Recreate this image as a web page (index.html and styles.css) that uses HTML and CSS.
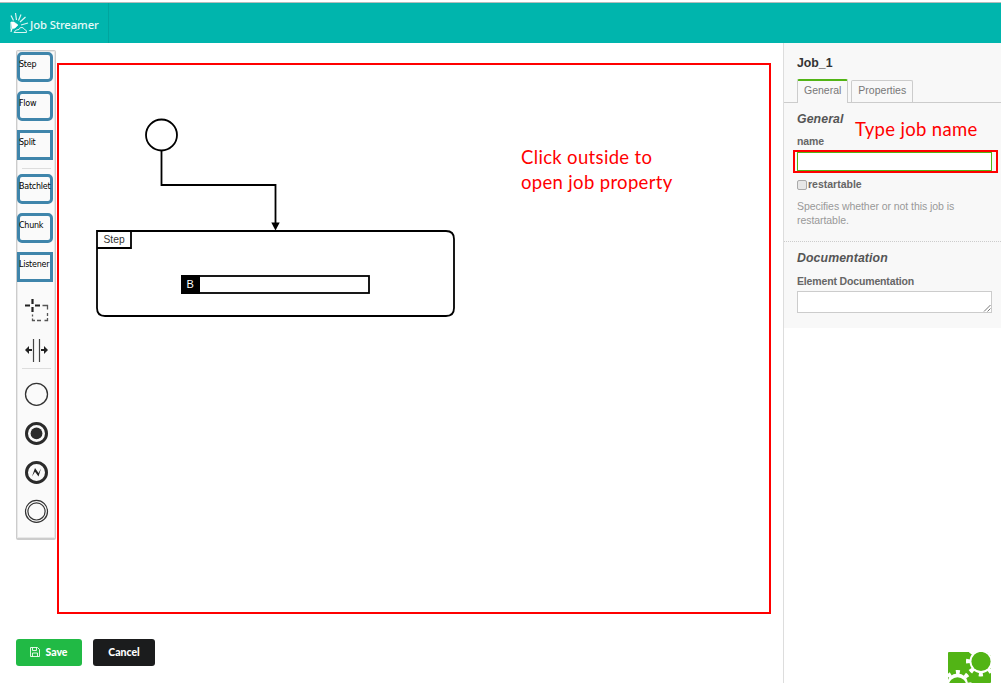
FILE: index.html
```html
<!DOCTYPE html>
<html lang="en">
<head>
<meta charset="utf-8">
<title>Job Streamer</title>
<link rel="stylesheet" href="styles.css">
</head>
<body>
<header class="topbar">
  <div class="brand">
    <svg class="brand-logo" width="19" height="24" viewBox="0 0 19 24" fill="none" stroke="#d9f6f3" stroke-width="1.2">
      <path d="M1 4.500l2.500 5M5.500 2l1 7M11 3.500l-2.500 6M15.500 6l-5.500 5M18 12l-7 2"/>
      <path d="M1 11v10l1-3M1 11l3 0 4 3-3 3-4 1z" fill="#fff" stroke="#fff" stroke-width=".6"/>
      <path d="M4 21.500h12.500q.5-2.500-2-3-1-2.500-3.500-2-2 .5-2 2-3-.5-5 3z" stroke-width="1"/>
    </svg>
    <span>Job Streamer</span>
  </div>
</header>
<div class="workspace">
  <main class="editor">
    <div class="modeler">
      <nav class="palette">
        <div class="tile round">Step</div>
        <div class="tile round">Flow</div>
        <div class="tile">Split</div>
        <hr class="sep">
        <div class="tile round">Batchlet</div>
        <div class="tile round">Chunk</div>
        <div class="tile">Listener</div>
        <svg class="tool first-tool" viewBox="0 0 30 30" fill="none" stroke="#222">
          <path d="M11.500 3v5M11.500 11v5M4 9.500h5M14 9.500h5" stroke-width="2.200"/>
          <path d="M21.500 9.500h5v4M26.500 17v3M26.500 22v2.500h-3M20 24.500h-4M14 24.500h-2.500v-2M11.500 20.500v-2" stroke="#555" stroke-width="1.300"/>
        </svg>
        <svg class="tool" viewBox="0 0 30 30">
          <path d="M12.500 4v23M18.500 4v23" stroke="#444" stroke-width="1.200"/>
          <path d="M4 15l4-4v3h3v2H8v3zM27 15l-4-4v3h-3v2h3v3z" fill="#222"/>
        </svg>
        <hr class="sep wide">
        <svg class="tool" viewBox="0 0 30 30" fill="none" stroke="#333"><circle cx="15.500" cy="15.300" r="11" stroke-width="1.300"/></svg>
        <svg class="tool" viewBox="0 0 30 30" fill="none" stroke="#2b2b2b"><circle cx="15.500" cy="15.400" r="10" stroke-width="3"/><circle cx="15.500" cy="15.400" r="5.900" fill="#2b2b2b" stroke="none"/></svg>
        <svg class="tool" viewBox="0 0 30 30" fill="none" stroke="#2b2b2b"><circle cx="15.500" cy="15.400" r="10" stroke-width="3"/><path d="M11 19.500l3-8.500 3.500 5 2.500-4.500-2.500 8-3.500-4.700z" fill="#222" stroke="none"/></svg>
        <svg class="tool" viewBox="0 0 30 30" fill="none" stroke="#333"><circle cx="15.500" cy="15.400" r="11" stroke-width="1.200"/><circle cx="15.500" cy="15.400" r="8.600" stroke-width="1.200"/></svg>
      </nav>
      <section class="canvas">
        <svg class="diagram" width="710" height="547" viewBox="59 65 710 547" fill="none" stroke="#000" stroke-width="1.8">
          <circle cx="161.500" cy="135" r="15.500"/>
          <path d="M161.500 151v34H275.500v40"/>
          <path d="M271.300 222.500h8.400l-4.200 8z" fill="#000" stroke="none"/>
          <path d="M97 231H446q8 0 8 8V308q0 8-8 8H105q-8 0-8-8z"/>
          <path d="M97 248H131V231"/>
          <rect x="182" y="276" width="187" height="17"/>
          <rect x="181" y="275" width="19" height="19" fill="#000" stroke="none"/>
          <text class="node-label" x="103.500" y="243">Step</text>
          <text class="node-badge" x="186.500" y="288">B</text>
        </svg>
        <p class="note canvas-note">Click outside to<br>open job property</p>
      </section>
    </div>
    <div class="actions">
      <button class="btn save">
        <svg width="10" height="10" viewBox="0 0 10 10" fill="none" stroke="#fff" stroke-opacity=".85"><path d="M.5.5h7l2 2v7h-9zM2.500.5v3h4v-3M2.500 9.500v-3.500h5v3.500"/></svg>
        Save
      </button>
      <button class="btn cancel">Cancel</button>
    </div>
  </main>
  <aside class="side">
    <div class="properties">
      <h1 class="element-id">Job_1</h1>
      <div class="tabs"><a class="tab active">General</a><a class="tab">Properties</a></div>
      <section class="group general">
        <h2>General</h2>
        <label class="field-label" for="name">name</label>
        <div class="name-field"><input id="name" class="name-input" type="text"></div>
        <div class="check-row"><span class="checkbox"></span><span>restartable</span></div>
        <p class="hint">Specifies whether or not this job is restartable.</p>
        <p class="note name-note">Type job name</p>
      </section>
      <section class="group documentation">
        <h2>Documentation</h2>
        <span class="field-label">Element Documentation</span>
        <div class="doc-input">
          <svg width="8" height="8" viewBox="0 0 8 8" stroke="#777" stroke-width="1"><path d="M1 7.500l6.500-6.500M4.500 7.500l3-3"/></svg>
        </div>
      </section>
    </div>
    <svg class="gear-logo" width="43" height="31" viewBox="0 0 43 31">
      <rect width="43" height="31" rx="1" fill="#52b415"/>
      <circle cx="33" cy="9.500" r="11.500" fill="#fff"/>
      <circle cx="33" cy="9.500" r="13" fill="none" stroke="#fff" stroke-width="4" stroke-dasharray="4.200 6.010" stroke-dashoffset="2.100"/>
      <circle cx="33" cy="9.500" r="9.600" fill="#52b415"/>
      <circle cx="9.500" cy="32" r="10.500" fill="#fff"/>
      <circle cx="9.500" cy="32" r="12" fill="none" stroke="#fff" stroke-width="4" stroke-dasharray="4 5.425" stroke-dashoffset="2"/>
      <circle cx="9.500" cy="34" r="8.800" fill="#52b415"/>
    </svg>
  </aside>
</div>
</body>
</html>
```
FILE: styles.css
```css
* { box-sizing: border-box; }
body {
  margin: 0;
  height: 683px;
  overflow: hidden;
  padding-top: 2px;
  background: #fff;
  font-family: "Liberation Sans", Arial, sans-serif;
}
h1, h2, p { margin: 0; }

.topbar {
  height: 41px;
  background: #00b5ad;
  border-top: 1px solid #b5bcbc;
  display: flex;
}
.brand {
  width: 109px;
  padding-left: 10px;
  border-right: 1px solid #00a59e;
  display: flex;
  align-items: center;
  color: #e6faf8;
  font: 500 11.3px "Noto Sans", sans-serif;
  white-space: nowrap;
  letter-spacing: -.12px;
}
.brand span { padding: 2px 0 0 1px; }

.workspace {
  display: grid;
  grid-template-columns: 784px 217px;
  height: 640px;
}
.editor { padding: 7px 13px 0 16px; }
.modeler { display: flex; align-items: flex-start; gap: 1px; }

.palette {
  width: 40px;
  height: 490px;
  padding: 1px 0 0;
  background: #fafafa;
  border: 1px solid #ccc;
  border-width: 1px 1px 2px;
  border-radius: 2px;
  box-shadow: inset 0 0 0 1px #e8e8e8;
}
.tile {
  width: 36px;
  height: 30px;
  margin-bottom: 9px;
  border: 3px solid #3f85ab;
  padding-top: 3px;
  color: #000;
  font: 8px/14px "DejaVu Sans", sans-serif;
  letter-spacing: -.25px;
  text-indent: -1px;
  white-space: nowrap;
}
.round { border-radius: 5px; }
.sep {
  width: 29px;
  height: 1px;
  margin: -1px 0 5px 5px;
  border: 0;
  background: #ddd;
}
.sep.wide { margin: -6px 0 10px 5px; }
.tool { display: block; width: 30px; height: 30px; margin: 0 0 9px 4px; }
.first-tool { margin-top: 14px; }

.canvas {
  position: relative;
  width: 714px;
  height: 551px;
  margin-top: 13px;
  border: 2px solid #f00;
}
.diagram { display: block; }
.node-label { font: 10.3px "Liberation Sans", sans-serif; fill: #333; stroke: none; }
.node-badge { font: 11px "Liberation Sans", sans-serif; fill: #fff; stroke: none; }

.note { color: #f00; font: 18.5px/25px Lato, sans-serif; letter-spacing: .33px; white-space: nowrap; }
.canvas-note { position: absolute; left: 462px; top: 80px; }
.name-note { position: absolute; left: 71px; top: 14px; }

.actions { display: flex; gap: 11px; margin-top: 25px; }
.btn {
  height: 27px;
  padding: 0 0 1px;
  border: 0;
  border-radius: 3px;
  color: #fff;
  font: 900 10.5px Lato, sans-serif;
  display: flex;
  align-items: center;
  justify-content: center;
}
.save { width: 66px; gap: 5px; background: #21ba45; }
.cancel { width: 62px; background: #1b1c1d; }

.side {
  border-left: 1px solid #ddd;
  margin-left: -1px;
  display: flex;
  flex-direction: column;
  justify-content: space-between;
}
.properties { height: 285px; background: #f8f8f8; color: #555; }
.element-id { padding: 13px 0 0 13px; font-size: 12.3px; line-height: 14px; height: 36px; color: #333; }
.tabs {
  height: 24px;
  padding-left: 13px;
  display: flex;
  align-items: flex-end;
  gap: 3px;
  border-bottom: 1px solid #ccc;
}
.tab {
  height: 22px;
  padding: 0 6px;
  border: 1px solid #ccc;
  border-bottom: 0;
  border-radius: 2px 2px 0 0;
  color: #777;
  font-size: 10.5px;
  line-height: 19px;
}
.tab.active {
  height: 24px;
  margin-bottom: -1px;
  border-top: 2px solid #52b415;
  background: #f8f8f8;
}
.group { position: relative; padding: 9px 9px 0 13px; }
.group h2 { font-size: 12.3px; font-style: italic; line-height: 15px; letter-spacing: .1px; }
.field-label { display: block; margin-top: 7px; font-size: 10.5px; font-weight: bold; line-height: 14px; letter-spacing: -.15px; color: #666; }
.general { height: 139px; border-bottom: 1px dotted #ccc; }
.name-field {
  width: 205px;
  height: 23px;
  margin: 2px 0 0 -4px;
  padding: 0 4px 0 2px;
  border: 2px solid #f00;
}
.name-input {
  display: block;
  width: 195px;
  height: 19px;
  border: 1px solid #52b415;
  outline: 0;
  background: #fff;
}
.check-row { display: flex; align-items: center; gap: 1px; margin-top: 4px; font-size: 10.5px; font-weight: bold; line-height: 14px; color: #666; }
.checkbox { width: 10px; height: 10px; margin-top: 2px; border: 1px solid #aaa; border-radius: 2px; background: #e7e7e7; }
.hint { margin-top: 8px; color: #999; font-size: 10.5px; line-height: 14px; letter-spacing: -.06px; }
.documentation .field-label { margin-top: 8px; }
.doc-input {
  width: 195px;
  height: 22px;
  margin-top: 3px;
  border: 1px solid #ccc;
  background: #fff;
  display: flex;
  align-items: flex-end;
  justify-content: flex-end;
}
.gear-logo { margin-left: 164px; }
```
